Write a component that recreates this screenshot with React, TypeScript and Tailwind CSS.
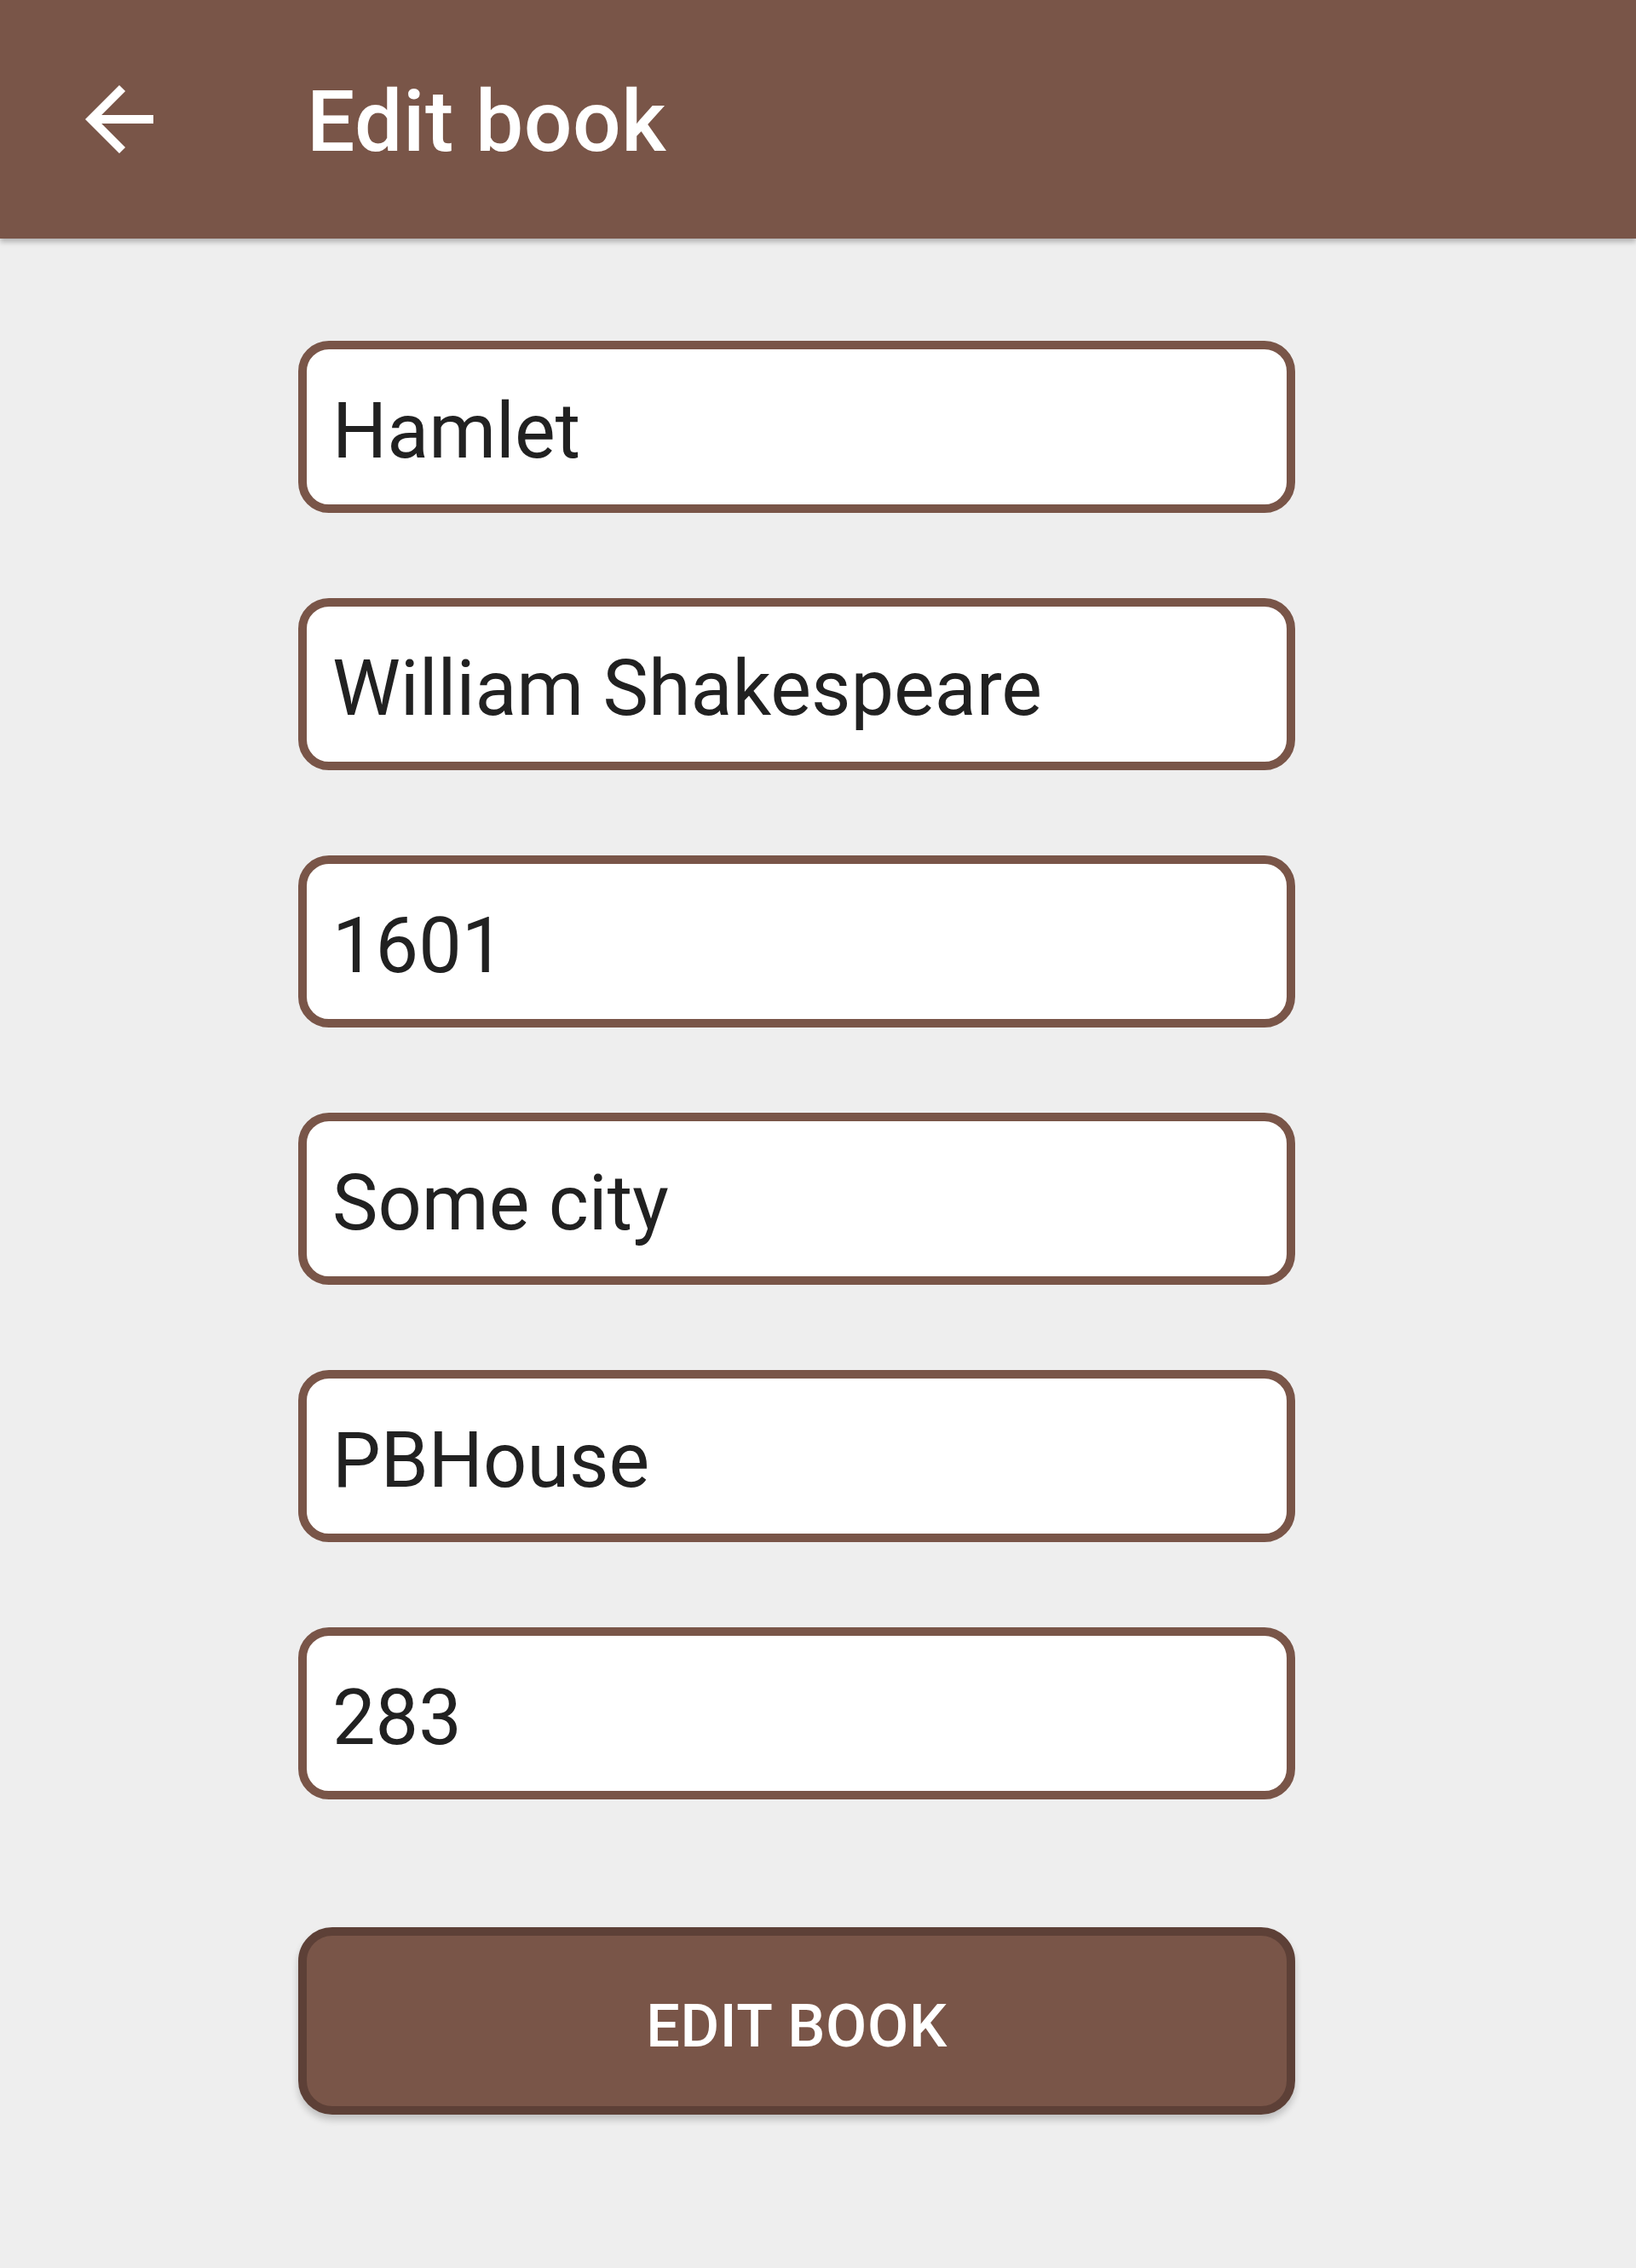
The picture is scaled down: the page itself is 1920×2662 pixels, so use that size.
import React from "react";

const FIELDS = ["Hamlet", "William Shakespeare", "1601", "Some city", "PBHouse", "283"];

function BackArrow() {
  return (
    <svg viewBox="0 0 24 24" className="h-[120px] w-[120px]" fill="#ffffff">
      <path d="M20 11H7.83l5.59-5.59L12 4l-8 8 8 8 1.41-1.41L7.83 13H20v-2z" />
    </svg>
  );
}

export default function App() {
  return (
    <div
      className="min-h-[2662px] bg-[#eeeeee]"
      style={{ fontFamily: "Roboto, 'Noto Sans', sans-serif" }}
    >
      {/* Toolbar */}
      <header className="flex h-[280px] items-center bg-[#795548] shadow-[0_4px_6px_rgba(0,0,0,0.25)]">
        <button className="ml-[80px] flex items-center justify-center">
          <BackArrow />
        </button>
        <h1 className="ml-[160px] translate-y-[3px] text-[100px] font-medium leading-none tracking-[0.005em] text-white">
          Edit book
        </h1>
      </header>

      {/* Form */}
      <main className="ml-[350px] flex w-[1170px] flex-col gap-[100px] pt-[120px]">
        {FIELDS.map((value) => (
          <input
            key={value}
            readOnly
            value={value}
            className="h-[202px] w-full rounded-[36px] border-[10px] border-[#795548] bg-white pl-[30px] pr-[35px] pt-[10px] text-[90px] text-[#212121] outline-none"
          />
        ))}

        <button className="mt-[50px] h-[220px] w-full rounded-[40px] border-[10px] border-[#5d4037] bg-[#795548] pt-[12px] text-[70px] font-medium uppercase leading-none tracking-[0.01em] text-white shadow-[0_6px_8px_rgba(0,0,0,0.2)]">
          Edit book
        </button>
      </main>
    </div>
  );
}
